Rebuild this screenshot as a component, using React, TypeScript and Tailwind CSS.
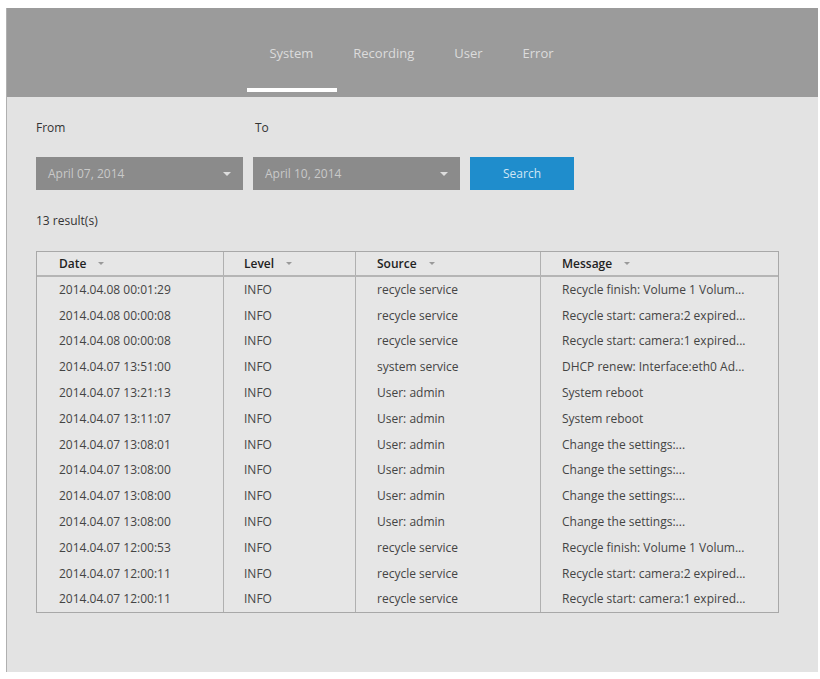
const rows = [
  ["2014.04.08 00:01:29","INFO","recycle service","Recycle finish: Volume 1 Volum..."],
  ["2014.04.08 00:00:08","INFO","recycle service","Recycle start: camera:2 expired..."],
  ["2014.04.08 00:00:08","INFO","recycle service","Recycle start: camera:1 expired..."],
  ["2014.04.07 13:51:00","INFO","system service","DHCP renew: Interface:eth0 Ad..."],
  ["2014.04.07 13:21:13","INFO","User: admin","System reboot"],
  ["2014.04.07 13:11:07","INFO","User: admin","System reboot"],
  ["2014.04.07 13:08:01","INFO","User: admin","Change the settings:..."],
  ["2014.04.07 13:08:00","INFO","User: admin","Change the settings:..."],
  ["2014.04.07 13:08:00","INFO","User: admin","Change the settings:..."],
  ["2014.04.07 13:08:00","INFO","User: admin","Change the settings:..."],
  ["2014.04.07 12:00:53","INFO","recycle service","Recycle finish: Volume 1 Volum..."],
  ["2014.04.07 12:00:11","INFO","recycle service","Recycle start: camera:2 expired..."],
  ["2014.04.07 12:00:11","INFO","recycle service","Recycle start: camera:1 expired..."],
];
const cols = ["w-[187px] pl-[22px]","w-[132px] pl-[20px]","w-[185px] pl-[21px]","flex-1 pl-[21px]"];
const Caret = () => <span className="ml-3 inline-block w-0 h-0 border-l-[3px] border-r-[3px] border-t-[3px] border-l-transparent border-r-transparent border-t-[#999]" />;

export default function App() {
  return (
    <div className="w-[820px] h-[679px] bg-white pt-[8px] pl-[6px] pr-[2px]" style={{fontFamily:'"Open Sans","Noto Sans",sans-serif'}}>
      <div className="h-[664px] bg-[#e3e3e3] border-l border-[#b0b0b0] flex flex-col">
        <div className="h-[89px] bg-[#9b9b9b] flex justify-center pr-[2px] text-[13px] text-[#dcdcdc]">
          <div className="flex gap-[40px] items-start pt-[36px]">
            <div className="relative">System<div className="absolute left-[-22px] top-[44px] w-[90px] h-[4px] bg-white" /></div>
            <div>Recording</div>
            <div>User</div>
            <div>Error</div>
          </div>
        </div>
        <div className="pl-[29px] pt-[22px] text-[#333]">
          <div className="flex text-[12px]"><div className="w-[219px]">From</div><div>To</div></div>
          <div className="flex gap-[10px] mt-[20px] text-[12px]">
            <div className="w-[207px] h-[33px] bg-[#8b8b8b] text-[#c9c9c9] flex items-center justify-between px-[12px]">April 07, 2014<span className="w-0 h-0 border-l-[4px] border-r-[4px] border-t-[4px] border-l-transparent border-r-transparent border-t-[#ddd]" /></div>
            <div className="w-[207px] h-[33px] bg-[#8b8b8b] text-[#c9c9c9] flex items-center justify-between px-[12px]">April 10, 2014<span className="w-0 h-0 border-l-[4px] border-r-[4px] border-t-[4px] border-l-transparent border-r-transparent border-t-[#ddd]" /></div>
            <div className="w-[104px] h-[33px] bg-[#1f8dcc] text-[#cfe6f5] flex items-center justify-center">Search</div>
          </div>
          <div className="mt-[22px] text-[12px]">13 result(s)</div>
          <div className="mt-[21px] w-[743px] border border-[#a8a8a8] text-[12px] bg-[#e6e6e6]">
            <div className="flex h-[25px] items-center border-b-2 border-[#b5b5b5] font-semibold text-[#222]">
              {["Date","Level","Source","Message"].map((h,i)=>(
                <div key={h} className={`${cols[i]} h-full flex items-center ${i<3?"border-r border-[#b0b0b0]":""}`}>{h}<Caret/></div>
              ))}
            </div>
            {rows.map((r,ri)=>(
              <div key={ri} className="flex h-[25.8px] items-center text-[#444]">
                {r.map((c,i)=>(
                  <div key={i} className={`${cols[i]} h-full flex items-center whitespace-nowrap ${i<3?"border-r border-[#b0b0b0]":""}`}>{c}</div>
                ))}
              </div>
            ))}
          </div>
        </div>
      </div>
    </div>
  );
}
